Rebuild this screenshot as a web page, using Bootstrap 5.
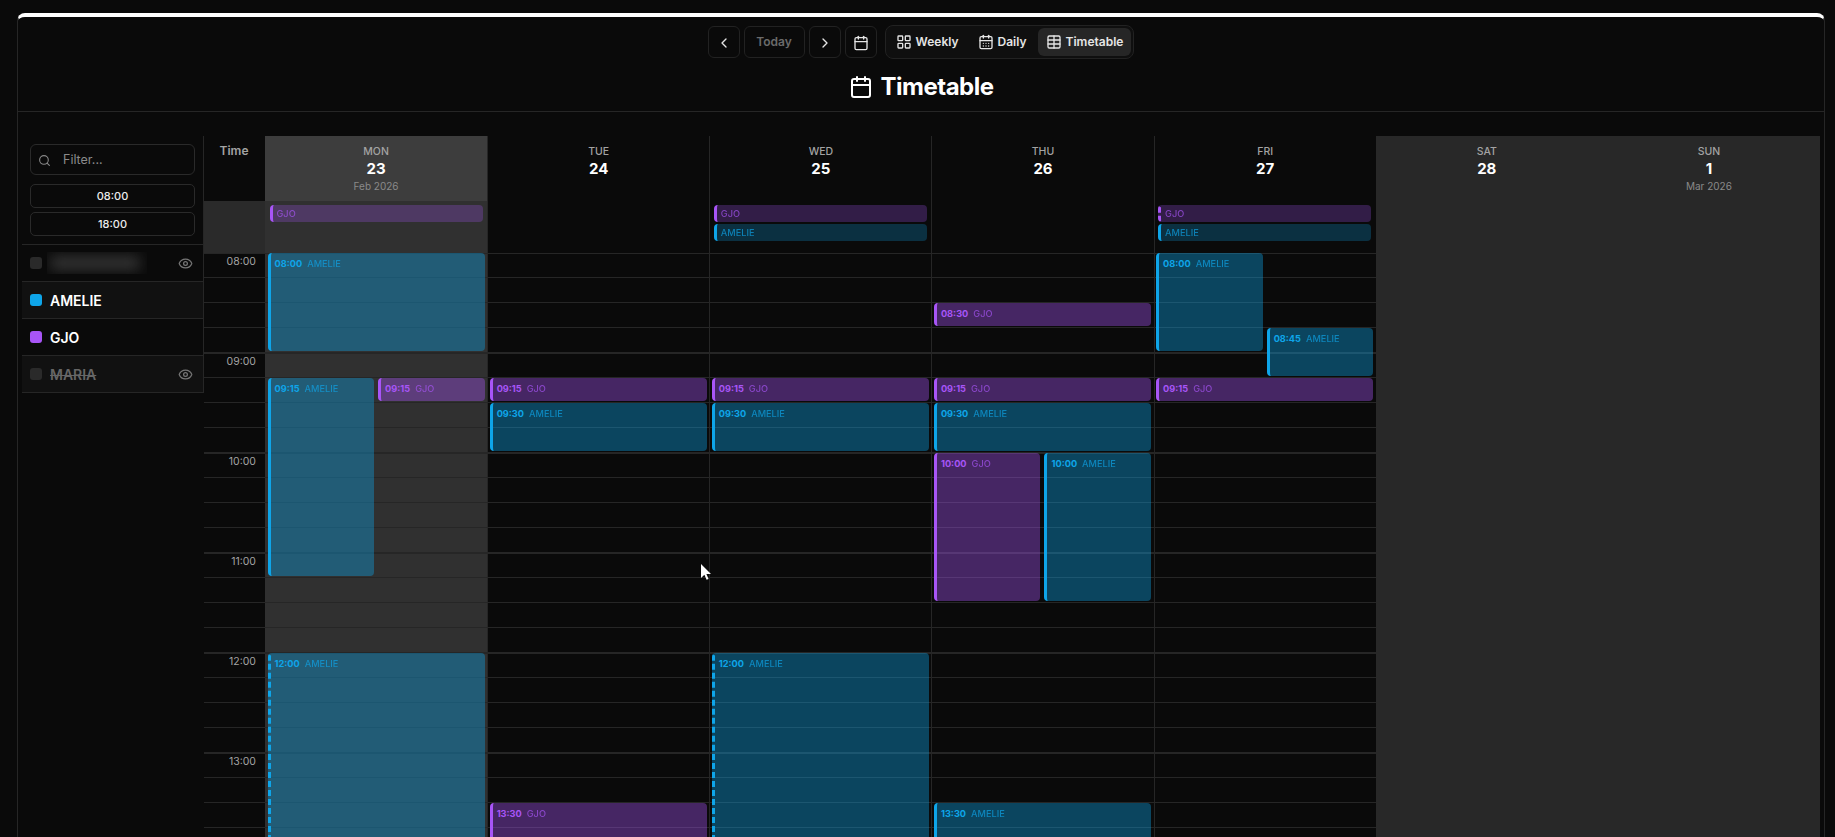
<!DOCTYPE html>
<html lang="en" data-bs-theme="dark">
<head>
  <meta charset="UTF-8">
  <meta name="viewport" content="width=device-width, initial-scale=1">
  <title>Timetable</title>
  <link href="https://cdn.jsdelivr.net/npm/bootstrap@5.3.0/dist/css/bootstrap.min.css" rel="stylesheet">
  <style>
    html, body { height: 100%; overflow: hidden; }
    body { background: #0a0a0a; font-family: Inter, "Liberation Sans", sans-serif; color: #fff; position: relative; }
    svg.ic { fill: none; stroke: currentColor; stroke-width: 2; stroke-linecap: round; stroke-linejoin: round; flex: none; }

    .shell { margin: 13px 10px 0 17px; height: 824px; background: #0a0a0a; border: 1px solid #262626; border-top: 4px solid #fff; border-bottom: 0; border-radius: 8px 8px 0 0; overflow: hidden; }
    .shell-head { flex: none; height: 95px; padding-top: 8px; border-bottom: 1px solid #262626; }
    .tb-btn { height: 32px; min-width: 32px; padding: 0; margin-top: 1px; background: #0a0a0a; border: 1px solid #222; border-radius: 6px; color: #e5e5e5; font-size: 12px; font-weight: 600; }
    .tb-btn.today { width: 61px; color: #6b6b6b; }
    .seg { height: 34px; padding: 2px; margin-left: 4px; gap: 3px; border: 1px solid #222; border-radius: 8px; background: #0f0f0f; }
    .seg-btn { height: 28px; padding: 0 8px; border: 0; border-radius: 6px; background: transparent; color: #e5e5e5; font-size: 12px; font-weight: 600; }
    .seg-btn.active { background: #262626; color: #e5e5e5; }
    .page-title { height: 32px; margin-top: 12px; font-size: 24px; font-weight: 700; letter-spacing: -.5px; }

    .side { flex: none; width: 186px; padding-left: 4px; margin-top: 24px; align-self: flex-start; }
    .side-inner { border-right: 1px solid #262626; border-bottom: 1px solid #262626; }
    .filters { padding: 8px; }
    .filter-box { height: 31px; margin-bottom: 9px; padding: 2px 0 0 7px; border: 1px solid #2a2a2a; border-radius: 6px; color: #888; }
    .filter-box input { width: 110px; padding: 0 0 0 4px; background: transparent; border: 0; color: #ddd; font-size: 12.5px; box-shadow: none; }
    .filter-box input::placeholder { color: #8a8a8a; }
    .time-btn { height: 24px; padding: 0; margin-bottom: 4px; border: 1px solid #2a2a2a; border-radius: 5px; background: transparent; color: #ededed; font-size: 11px; font-weight: 500; }
    .time-btn:last-child { margin-bottom: 0; }
    .list-group .person { height: 37px; padding: 0 10px 0 8px; gap: 8px; background: #0a0a0a; border: 0; border-top: 1px solid #262626; border-radius: 0; font-size: 14px; font-weight: 600; color: #fff; }
    .list-group .person.alt { background: #111; }
    .person .dot { width: 12px; height: 12px; border-radius: 3px; background: #2a2a2a; flex: none; }
    .person.off .name { color: #666; text-decoration: line-through; }
    .person .eye { margin-left: auto; color: #777; }
    .blur-clip { width: 100px; height: 22px; margin-left: -3px; overflow: hidden; }
    .blur-name { width: 90px; height: 14px; margin: 4px 0 0 3px; background: #363636; filter: blur(7px); }

    .tt-grid { flex: 1; min-width: 0; display: grid; grid-template-columns: 61px repeat(7, minmax(0, 1fr)); grid-template-rows: 65px 52px 600px; margin: 24px 4px 0 0; }
    .h-time { padding: 6px 1px 0 0; text-align: center; font-size: 12px; font-weight: 600; color: #a3a3a3; }
    .h-day { padding-top: 9px; text-align: center; line-height: 1; }
    .h-day .dow { font-size: 10.5px; font-weight: 500; color: #a3a3a3; line-height: 14px; }
    .h-day .num { font-size: 15px; font-weight: 700; line-height: 20px; }
    .h-day .sub { font-size: 10px; color: #8a8a8a; line-height: 13px; margin-top: 1px; }
    .all-time { background: #2a2a2a; }
    .all-day { padding: 4px 4.5px 4px 3.5px; }
    .lined { background-image: repeating-linear-gradient(to bottom, #262626 0 1px, transparent 1px 24px, #262626 24px 25px, transparent 25px 49px, #262626 49px 50px, transparent 50px 74px, #262626 74px 75px, transparent 75px 99px, #262626 99px 100px); }
    .time-col div { height: 100px; padding: 2px 9px 0 0; text-align: right; font-size: 10.5px; line-height: 13px; color: #a3a3a3; }
    .day { border-left: 1px solid #262626; }
    .day.today, .day.today-h, .day.off { border-left: 0; }
    .day.today { background-color: #303030; padding-left: 4.5px; }
    .day.today-h { background-color: #3d3d3d; padding-left: 0; }
    .day.off { background: #282828; }
    .day-body { display: grid; grid-template-columns: repeat(2, minmax(0, 1fr)); grid-template-rows: repeat(24, 25px); column-gap: 4px; padding: 0 2.5px 0 1.5px; }
    .day-body.today { padding-left: 2.5px; }

    .ev { min-width: 0; margin-bottom: 2px; padding: 4px 4px 0; border-left: 3px solid; border-radius: 4px; font-size: 9.2px; line-height: 13px; white-space: nowrap; overflow: hidden; }
    .ev b { font-size: 9.2px; font-weight: 700; margin-right: 5px; }
    .ev span, .ad span { font-weight: 500; opacity: .68; }
    .ad { height: 17px; margin-bottom: 2px; padding: 0 4px; border-left: 3px solid; border-radius: 4px; font-size: 9.2px; line-height: 17px; }
    .dashed { border-left-style: dashed; }
    .c-a { color: #0ea5e9; border-left-color: #0ea5e9; }
    .c-g { color: #a855f7; border-left-color: #a855f7; }
    .ev.c-a { background: rgba(14, 165, 233, .38); }
    .ev.c-g { background: rgba(168, 85, 247, .38); }
    .ad.c-a { background: rgba(14, 165, 233, .25); }
    .ad.c-g { background: rgba(168, 85, 247, .26); }
    .cursor { position: absolute; left: 700px; top: 563px; pointer-events: none; }
  </style>
</head>
<body>
  <svg width="0" height="0" class="position-absolute">
    <symbol id="i-cal" viewBox="0 0 24 24"><path d="M8 2v4"/><path d="M16 2v4"/><rect x="3" y="4" width="18" height="18" rx="2"/><path d="M3 10h18"/></symbol>
    <symbol id="i-days" viewBox="0 0 24 24"><path d="M8 2v4"/><path d="M16 2v4"/><rect x="3" y="4" width="18" height="18" rx="2"/><path d="M3 10h18"/><path d="M8 14h.01"/><path d="M12 14h.01"/><path d="M16 14h.01"/><path d="M8 18h.01"/><path d="M12 18h.01"/><path d="M16 18h.01"/></symbol>
    <symbol id="i-grid" viewBox="0 0 24 24"><rect x="3" y="3" width="7" height="7" rx="1"/><rect x="14" y="3" width="7" height="7" rx="1"/><rect x="14" y="14" width="7" height="7" rx="1"/><rect x="3" y="14" width="7" height="7" rx="1"/></symbol>
    <symbol id="i-table" viewBox="0 0 24 24"><path d="M12 3v18"/><rect x="3" y="3" width="18" height="18" rx="2"/><path d="M3 9h18"/><path d="M3 15h18"/></symbol>
    <symbol id="i-eye" viewBox="0 0 24 24"><path d="M2.062 12.348a1 1 0 0 1 0-.696 10.75 10.75 0 0 1 19.876 0 1 1 0 0 1 0 .696 10.75 10.75 0 0 1-19.876 0"/><circle cx="12" cy="12" r="3"/></symbol>
  </svg>

  <div class="card shell">
    <div class="shell-head">
      <div class="d-flex justify-content-center gap-1">
        <button class="btn tb-btn"><svg class="ic" width="16" height="16" viewBox="0 0 24 24"><path d="m15 18-6-6 6-6"/></svg></button>
        <button class="btn tb-btn today">Today</button>
        <button class="btn tb-btn"><svg class="ic" width="16" height="16" viewBox="0 0 24 24"><path d="m9 18 6-6-6-6"/></svg></button>
        <button class="btn tb-btn"><svg class="ic" width="16" height="16"><use href="#i-cal"/></svg></button>
        <div class="seg d-flex">
          <button class="btn seg-btn d-flex align-items-center gap-1"><svg class="ic" width="16" height="16"><use href="#i-grid"/></svg>Weekly</button>
          <button class="btn seg-btn d-flex align-items-center gap-1"><svg class="ic" width="16" height="16"><use href="#i-days"/></svg>Daily</button>
          <button class="btn seg-btn active d-flex align-items-center gap-1"><svg class="ic" width="16" height="16"><use href="#i-table"/></svg>Timetable</button>
        </div>
      </div>
      <div class="page-title d-flex justify-content-center align-items-center gap-2">
        <svg class="ic" width="24" height="24"><use href="#i-cal"/></svg>Timetable
      </div>
    </div>

    <div class="d-flex">
      <div class="side">
        <div class="side-inner">
          <div class="filters d-flex flex-column">
            <div class="filter-box d-flex align-items-center gap-2">
              <svg class="ic" width="13" height="13" viewBox="0 0 24 24"><circle cx="11" cy="11" r="8"/><path d="m21 21-4.3-4.3"/></svg>
              <input class="form-control" type="text" placeholder="Filter...">
            </div>
            <button class="btn time-btn">08:00</button>
            <button class="btn time-btn">18:00</button>
          </div>
          <div class="list-group list-group-flush">
            <div class="list-group-item person d-flex align-items-center">
              <span class="dot"></span>
              <div class="blur-clip"><div class="blur-name"></div></div>
              <svg class="ic eye" width="15" height="15"><use href="#i-eye"/></svg>
            </div>
            <div class="list-group-item person alt d-flex align-items-center"><span class="dot" style="background:#0ea5e9"></span><span class="name">AMELIE</span></div>
            <div class="list-group-item person d-flex align-items-center"><span class="dot" style="background:#a855f7"></span><span class="name">GJO</span></div>
            <div class="list-group-item person alt off d-flex align-items-center">
              <span class="dot"></span><span class="name">MARIA</span>
              <svg class="ic eye" width="15" height="15"><use href="#i-eye"/></svg>
            </div>
          </div>
        </div>
      </div>

      <div class="tt-grid" id="grid"></div>
    </div>
  </div>

  <svg class="cursor" width="12" height="18" viewBox="0 0 12 18"><path d="M1 1v14l3.4-3.2 2.2 5 2-.9-2.2-4.9H11z" fill="#fff"/></svg>

  <script src="https://cdn.jsdelivr.net/npm/bootstrap@5.3.0/dist/js/bootstrap.bundle.min.js"></script>
  <script>
    // [hora, cuartos, persona, columna (0 = ancho completo), discontinuo]
    const dias = [
      { dow: "MON", num: 23, sub: "Feb 2026", cls: "today", ad: [["g", "GJO"]], ev: [
        ["08:00", 4, "a"], ["09:15", 8, "a", 1], ["09:15", 1, "g", 2], ["12:00", 12, "a", 0, 1]] },
      { dow: "TUE", num: 24, ad: [], ev: [
        ["09:15", 1, "g"], ["09:30", 2, "a"], ["13:30", 8, "g"]] },
      { dow: "WED", num: 25, ad: [["g", "GJO"], ["a", "AMELIE"]], ev: [
        ["09:15", 1, "g"], ["09:30", 2, "a"], ["12:00", 12, "a", 0, 1]] },
      { dow: "THU", num: 26, ad: [], ev: [
        ["08:30", 1, "g"], ["09:15", 1, "g"], ["09:30", 2, "a"], ["10:00", 6, "g", 1], ["10:00", 6, "a", 2], ["13:30", 8, "a"]] },
      { dow: "FRI", num: 27, ad: [["g", "GJO", 1], ["a", "AMELIE"]], ev: [
        ["08:00", 4, "a", 1], ["08:45", 2, "a", 2], ["09:15", 1, "g"]] },
      { dow: "SAT", num: 28, cls: "off", ad: [], ev: [] },
      { dow: "SUN", num: 1, sub: "Mar 2026", cls: "off", ad: [], ev: [] }
    ];
    const nombres = { a: "AMELIE", g: "GJO" };
    const grid = document.getElementById("grid");

    function celda(clase, html) {
      const el = document.createElement("div");
      el.className = clase;
      el.innerHTML = html || "";
      grid.appendChild(el);
      return el;
    }

    function cuarto(hora) {
      const [h, m] = hora.split(":").map(Number);
      return (h - 8) * 4 + m / 15;
    }

    celda("h-time", "Time");
    dias.forEach(d => {
      const cls = d.cls === "today" ? "today-h" : d.cls || "";
      celda(`h-day day ${cls}`, `<div class="dow">${d.dow}</div><div class="num">${d.num}</div>${d.sub ? `<div class="sub">${d.sub}</div>` : ""}`);
    });

    celda("all-time");
    dias.forEach(d => {
      const html = d.ad.map(a => `<div class="ad c-${a[0]} ${a[2] ? "dashed" : ""}"><span>${a[1]}</span></div>`).join("");
      celda(`all-day day ${d.cls || ""}`, html);
    });

    let horas = "";
    for (let h = 8; h < 14; h++) horas += `<div>${String(h).padStart(2, "0")}:00</div>`;
    celda("time-col lined", horas);

    dias.forEach(d => {
      const col = celda(`day-body day ${d.cls === "off" ? "off" : "lined " + (d.cls || "")}`);
      d.ev.forEach(([hora, len, p, c, dash]) => {
        const ev = document.createElement("div");
        ev.className = `ev c-${p} ${dash ? "dashed" : ""}`;
        ev.style.gridRow = `${cuarto(hora) + 1} / span ${len}`;
        ev.style.gridColumn = c ? String(c) : "1 / -1";
        ev.innerHTML = `<b>${hora}</b><span>${nombres[p]}</span>`;
        col.appendChild(ev);
      });
    });
  </script>
</body>
</html>
